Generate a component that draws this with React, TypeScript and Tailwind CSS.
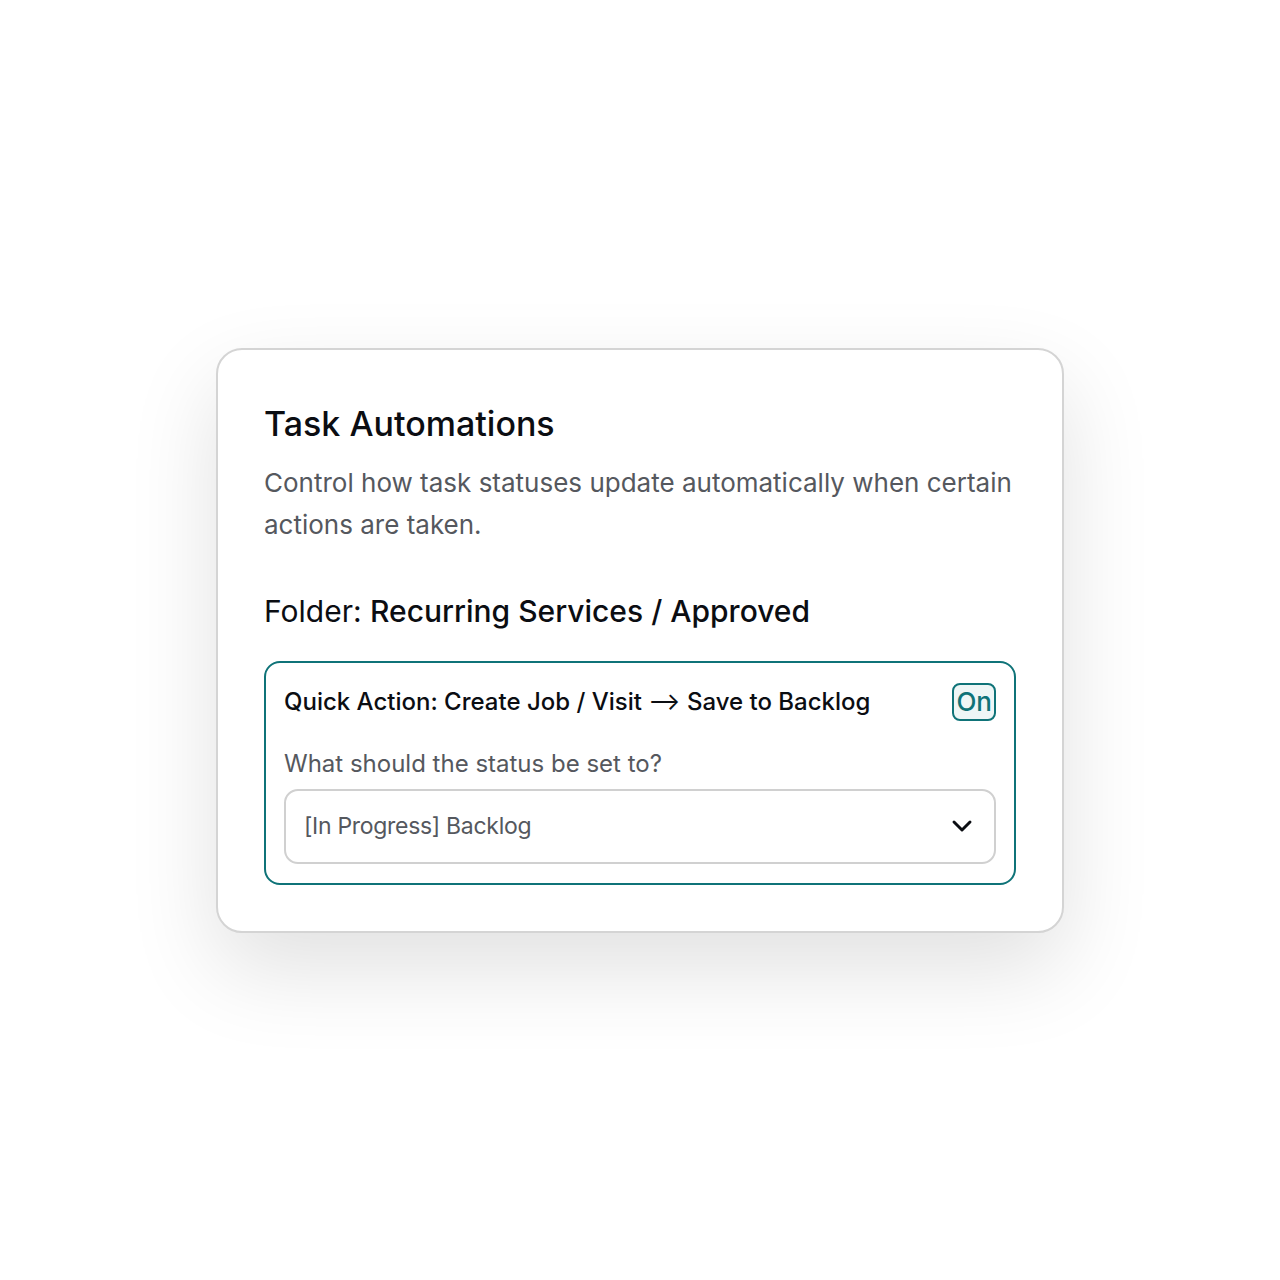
import { ChevronDown } from 'lucide-react'

export default function App() {
  return (
    <div
      className="flex min-h-[1280px] w-full items-center justify-center bg-white"
      style={{ fontFamily: 'Inter, "Noto Sans", sans-serif' }}
    >
      <div className="w-[848px] rounded-[26px] border-2 border-[#d4d4d4] bg-white px-[46px] pt-[52px] pb-[46px] shadow-[0_36px_90px_rgba(0,0,0,0.12)]">
        <h1 className="text-[34px] leading-[44px] font-medium text-[#0b0d12]">Task Automations</h1>
        <p className="mt-[16px] text-[26px] leading-[42px] text-[#55585e]">
          Control how task statuses update automatically when certain actions are taken.
        </p>

        <p className="mt-[45px] text-[30px] leading-[40px] text-[#0b0d12]">
          Folder: <span className="font-medium">Recurring Services / Approved</span>
        </p>

        <div className="mt-[30px] rounded-[16px] border-2 border-[#0f7378] px-[18px] pt-[20px] pb-[19px]">
          <div className="flex items-center justify-between">
            <span className="text-[24px] leading-[38px] font-medium text-[#0b0d12]">
              Quick Action: Create Job / Visit <span className="font-normal">⟶</span> Save to Backlog
            </span>
            <span className="flex h-[38px] items-center rounded-[8px] border-2 border-[#0f7378] bg-[#eef6f6] px-[2px] text-[26px] leading-none font-medium text-[#0f7378]">
              On
            </span>
          </div>

          <p className="mt-[27px] text-[24px] leading-[32px] text-[#55585e]">What should the status be set to?</p>

          <div className="mt-[9px] flex h-[75px] items-center justify-between rounded-[14px] border-2 border-[#d0d0d0] bg-white pr-[16px] pl-[18px]">
            <span className="text-[23px] tracking-[-0.3px] text-[#55585e]">[In Progress] Backlog</span>
            <ChevronDown className="h-[32px] w-[32px] text-[#0b0d12]" strokeWidth={2.2} />
          </div>
        </div>
      </div>
    </div>
  )
}
